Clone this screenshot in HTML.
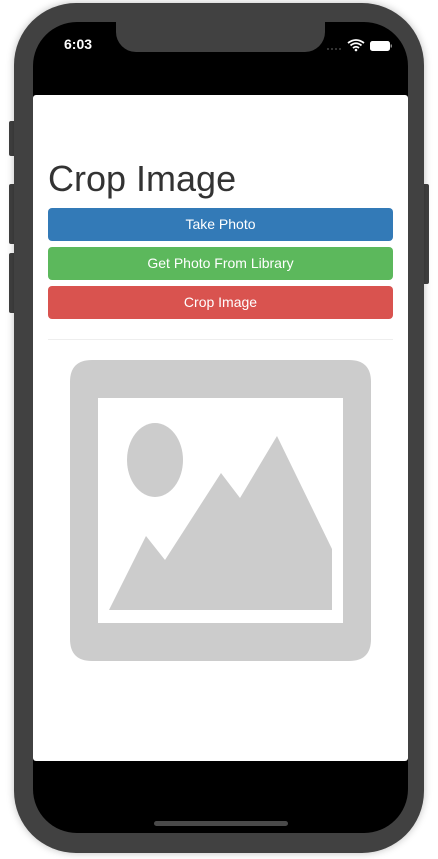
<!DOCTYPE html>
<html><head><style>
html,body{margin:0;padding:0;width:438px;height:859px;background:#fff;overflow:hidden;font-family:"Liberation Sans",Helvetica,Arial,sans-serif;}
.abs{position:absolute}
.btn{position:absolute;left:48px;width:345px;height:33px;border-radius:4px;color:#fff;font-size:14px;line-height:33px;text-align:center}
</style></head><body>
<div class="abs" style="left:9px;top:121px;width:8px;height:35px;background:#404040;border-radius:2px"></div>
<div class="abs" style="left:9px;top:184px;width:8px;height:60px;background:#404040;border-radius:2px"></div>
<div class="abs" style="left:9px;top:253px;width:8px;height:60px;background:#404040;border-radius:2px"></div>
<div class="abs" style="left:421px;top:184px;width:8px;height:100px;background:#404040;border-radius:2px"></div>
<div class="abs" style="left:14px;top:3px;width:410px;height:850px;background:#414141;border-radius:62px;box-shadow:0 0 8px rgba(0,0,0,0.25)"></div>
<div class="abs" style="left:33px;top:22px;width:375px;height:811px;background:#000;border-radius:44px"></div>
<div class="abs" style="left:116px;top:18px;width:209px;height:34px;background:#414141;border-radius:0 0 20px 20px"></div>
<div class="abs" style="left:64px;top:36px;color:#fff;font-size:14px;font-weight:bold">6:03</div>
<svg class="abs" style="left:326px;top:38px" width="66" height="14" viewBox="0 0 66 14">
<g fill="#444"><circle cx="2" cy="11" r="1"/><circle cx="6" cy="11" r="1"/><circle cx="10" cy="11" r="1"/><circle cx="14" cy="11" r="1"/></g>
<path d="M22 5 Q30 -1 38 5 M24.5 7.5 Q30 3 35.5 7.5 M27 10 Q30 7.5 33 10" stroke="#fff" stroke-width="1.8" fill="none"/>
<circle cx="30" cy="12" r="1.3" fill="#fff"/>
<rect x="44.5" y="3.5" width="19" height="9" rx="2" fill="#fff" stroke="#fff"/>
<rect x="64.5" y="6.5" width="1.5" height="3" fill="#888"/>
</svg>
<div class="abs" style="left:33px;top:95px;width:375px;height:666px;background:#fff;border-radius:3px"></div>
<div class="abs" style="left:48px;top:158px;font-size:36px;color:#333;line-height:42px">Crop Image</div>
<div class="btn" style="top:208px;background:#337ab7">Take Photo</div>
<div class="btn" style="top:247px;background:#5cb85c">Get Photo From Library</div>
<div class="btn" style="top:286px;background:#d9534f">Crop Image</div>
<div class="abs" style="left:48px;top:339px;width:345px;height:1px;background:#eee"></div>
<svg class="abs" style="left:0;top:0" width="438" height="859">
<path fill="#cccccc" fill-rule="evenodd" d="M92 360 H349 Q371 360 371 382 V639 Q371 661 349 661 H92 Q70 661 70 639 V382 Q70 360 92 360 Z M98 398 V623 H343 V398 Z"/>
<ellipse cx="155" cy="460" rx="28" ry="37" fill="#cccccc"/>
<polygon fill="#cccccc" points="109,610 146,536 165,560 221,473 240,498 277,436 332,549 332,610"/>
</svg>
<div class="abs" style="left:154px;top:821px;width:134px;height:5px;background:#4a4a4a;border-radius:3px"></div>
</body></html>
